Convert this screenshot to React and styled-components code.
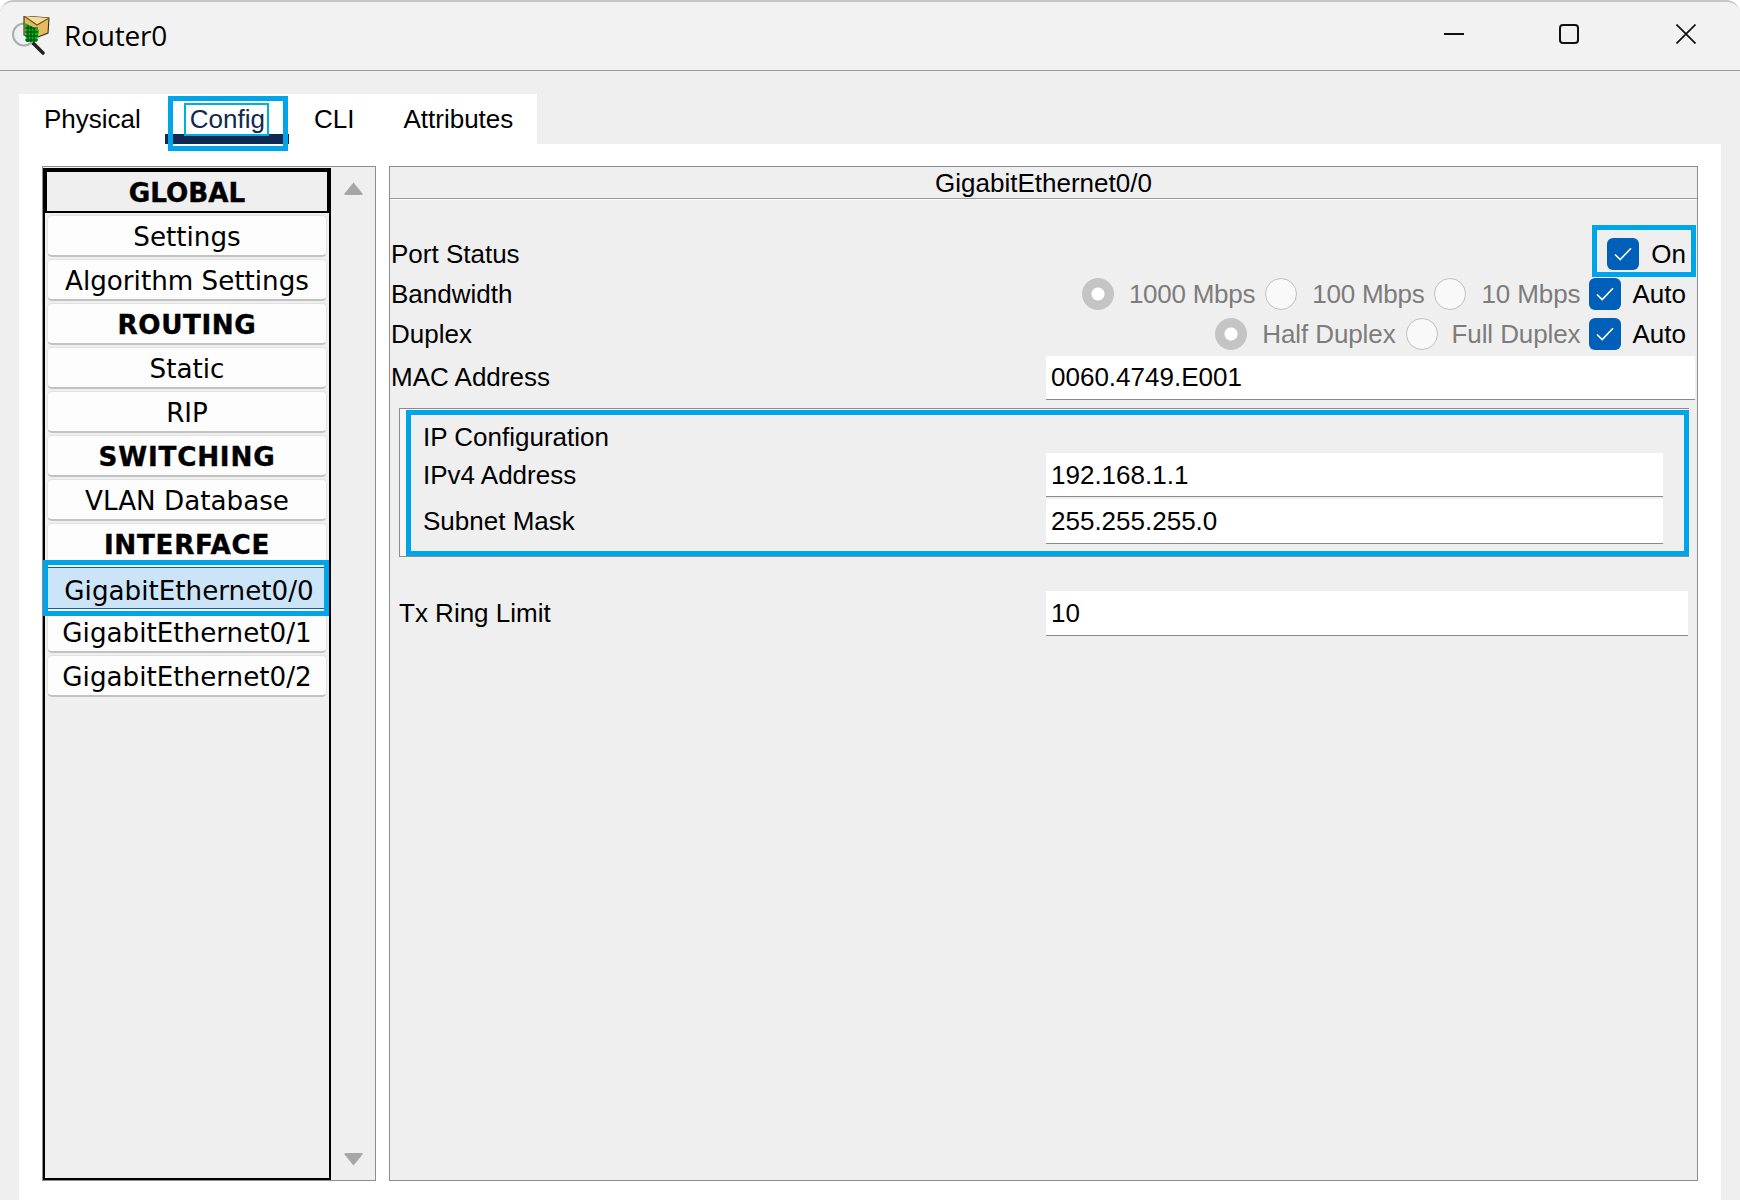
import React from "react";
import styled, { createGlobalStyle } from "styled-components";

const Global = createGlobalStyle`
  html, body { margin: 0; padding: 0; background: #fff; overflow: hidden; }
  * { box-sizing: border-box; }
`;

const Window = styled.div`
  width: 1740px;
  height: 1200px;
  display: flex;
  flex-direction: column;
  background: #efefef;
  border-top: 2px solid #c6c6c6;
  border-radius: 14px 14px 0 0;
  overflow: hidden;
  font-family: "Liberation Sans", Arial, sans-serif;
  color: #000;
`;

const TitleBar = styled.header`
  height: 69px;
  flex: none;
  display: flex;
  align-items: center;
  background: #f2f2f2;
  border-bottom: 1px solid #9c9c9c;
  padding-left: 11px;
`;

const AppIcon = styled.svg`
  width: 40px;
  height: 40px;
  flex: none;
`;

const Title = styled.h1`
  margin: -2px 0 0 13px;
  font: 400 28px "Open Sans", sans-serif;
  letter-spacing: -0.2px;
`;

const Controls = styled.div`
  margin-left: auto;
  margin-top: -4px;
  display: flex;
  padding-right: 44px;
`;

const ControlIcon = styled.svg`
  width: 20px;
  height: 20px;
  display: block;
  fill: none;
  stroke: #111;
  stroke-width: 2;
  margin-left: ${(p) => p.$gap || 0}px;
`;

const Stage = styled.div`
  flex: 1;
  min-height: 0;
  padding: 23px 19px 0;
  display: flex;
  flex-direction: column;
`;

const TabStrip = styled.nav`
  height: 50px;
  flex: none;
  align-self: flex-start;
  display: flex;
  background: #fff;
`;

const Tab = styled.div`
  position: relative;
  height: 50px;
  padding: 0 24px 0 25px;
  display: flex;
  align-items: center;
  font-size: 26px;
  color: ${(p) => (p.$active ? "#10294f" : "#000")};
  ${(p) => p.$active && "border-bottom: 10px solid #0f2a52; padding-top: 10px;"}
`;

const TabText = styled.span`
  position: relative;
`;

const TabFocus = styled.span`
  position: absolute;
  left: -6px;
  right: -4px;
  top: -1px;
  bottom: -1px;
  border: 2px solid #00aee6;
`;

const TabFrame = styled.span`
  position: absolute;
  left: 3px;
  right: 1px;
  top: 2px;
  bottom: -17px;
  border: 5px solid #00a4e8;
`;

const Sheet = styled.main`
  flex: 1;
  min-height: 0;
  background: #fff;
  display: flex;
  gap: 13px;
  padding: 22px 23px 19px 23px;
`;

const Sidebar = styled.aside`
  width: 334px;
  flex: none;
  display: flex;
  background: #efefef;
  border: 1px solid #8c8c94;
`;

const List = styled.div`
  width: 288px;
  flex: none;
  margin: 1px 0 0 0;
  border: 2px solid #000;
  padding: 0 2px;
  display: flex;
  flex-direction: column;
  gap: 2px;
`;

const Row = styled.div`
  height: ${(p) => (p.$focused ? 43 : 42)}px;
  flex: none;
  display: flex;
  align-items: center;
  justify-content: center;
  position: relative;
  padding-top: 2px;
  font-family: "DejaVu Sans", Verdana, sans-serif;
  font-size: 26.2px;
  font-weight: ${(p) => (p.$heading ? 700 : 400)};
  letter-spacing: ${(p) => p.$ls || 0}px;
  ${(p) => p.$heading && "-webkit-text-stroke: 0.4px #000;"}
  background: #fdfdfd;
  border: 1px solid #e2e2e2;
  border-bottom: 2px solid #c2c2c2;
  border-radius: 5px;
  ${(p) =>
    p.$focused &&
    `margin: 0 -2px;
     background: #efefef;
     border: 2px solid #000;
     border-radius: 0;`}
  ${(p) =>
    p.$selected &&
    `background: #cbe4f8;
     border: 0;
     border-top: 1px solid #0b5fa5;
     border-bottom: 1px solid #0b5fa5;
     border-radius: 0;
     padding: 6px 0 0 4px;
     box-shadow: 0 -4px 0 #fdfdfd, 0 4px 0 #fdfdfd;
     z-index: 1;`}
`;

const RowFrame = styled.span`
  position: absolute;
  left: -4px;
  right: -2px;
  top: -8px;
  bottom: -8px;
  border: 5px solid #00a4e8;
`;

const ScrollColumn = styled.div`
  flex: 1;
  position: relative;
  display: flex;
  flex-direction: column;
  align-items: center;
  justify-content: space-between;
  padding: 15px 0 14px;
`;

const Arrow = styled.svg`
  width: 19px;
  height: 14px;
  display: block;
  fill: #a6a6a6;
`;

const Panel = styled.section`
  flex: 1;
  min-width: 0;
  background: #efefef;
  border: 1px solid #8c8c94;
  display: flex;
  flex-direction: column;
`;

const PanelHeader = styled.div`
  height: 32px;
  flex: none;
  display: flex;
  align-items: center;
  justify-content: center;
  padding-top: 2px;
  font-size: 26px;
  border-bottom: 1px solid #9a9a9a;
  box-shadow: 0 1px 0 #fafafa;
`;

const PanelBody = styled.div`
  padding: 39px 2px 0 1px;
  display: flex;
  flex-direction: column;
`;

const ControlRow = styled.div`
  height: 32px;
  margin-bottom: 8px;
  display: flex;
  align-items: center;
  padding-right: 9px;
  font-size: 26px;
`;

const RowLabel = styled.span`
  margin-right: auto;
`;

const RadioOption = styled.span`
  display: flex;
  align-items: center;
  gap: ${(p) => p.$gap || 15}px;
  margin-right: ${(p) => p.$end || 10}px;
  letter-spacing: ${(p) => p.$ls || 0}px;
  color: #7c7c7c;
`;

const Radio = styled.span`
  width: 32px;
  height: 32px;
  border-radius: 50%;
  flex: none;
  display: block;
  background: ${(p) =>
    p.$on ? "radial-gradient(circle, #fff 0 6px, #c4c4c4 7px)" : "#f9f9f9"};
  border: ${(p) => (p.$on ? "0" : "1.5px solid #c0c0c0")};
`;

const Check = styled.span`
  width: 32px;
  height: 32px;
  flex: none;
  display: flex;
  align-items: center;
  justify-content: center;
  background: #005fb8;
  border-radius: 6px;
`;

const CheckMark = styled.svg`
  width: 18px;
  height: 14px;
  fill: none;
  stroke: #fff;
  stroke-width: 1.6;
`;

const CheckOption = styled.span`
  position: relative;
  display: flex;
  align-items: center;
  gap: ${(p) => p.$gap}px;
`;

const OnFrame = styled.span`
  position: absolute;
  left: -15px;
  right: -10px;
  top: -13px;
  bottom: -7px;
  border: 5px solid #00a4e8;
`;

const FieldRow = styled.div`
  display: grid;
  grid-template-columns: ${(p) => p.$label}px ${(p) => p.$field};
  align-items: center;
  font-size: 26px;
  height: ${(p) => p.$h || 44}px;
  flex: none;
`;

const FieldLabel = styled.span`
  margin-top: ${(p) => p.$top || 0}px;
`;

const Field = styled.div`
  height: 100%;
  background: #fff;
  border-bottom: 1px solid #8a8a8a;
  padding-left: 5px;
  padding-top: ${(p) => p.$top || 0}px;
  display: flex;
  align-items: center;
`;

const GroupBox = styled.div`
  margin: 8px 6px 0 8px;
  height: 149px;
  flex: none;
  border: 1px solid #8c8c8c;
  border-right: 0;
  background: #f6f6f6;
  padding: 1px 0 0 6px;
`;

const GroupFrame = styled.div`
  height: 146px;
  border: 5px solid #00a4e8;
  background: #efefef;
  padding: 0 0 0 12px;
`;

const GroupTitle = styled.div`
  height: 38px;
  padding-top: 6px;
  line-height: 32px;
  font-size: 26px;
`;

const Spaced = styled.div`
  margin-bottom: ${(p) => p.$b}px;
  margin-left: ${(p) => p.$l || 0}px;
  margin-right: ${(p) => p.$r || 0}px;
  margin-top: ${(p) => p.$t || 0}px;
`;

const rows = [
  { label: "GLOBAL", heading: true, focused: true },
  { label: "Settings" },
  { label: "Algorithm Settings" },
  { label: "ROUTING", heading: true, ls: 0.6 },
  { label: "Static" },
  { label: "RIP" },
  { label: "SWITCHING", heading: true, ls: 0.8 },
  { label: "VLAN Database" },
  { label: "INTERFACE", heading: true, ls: 0.7 },
  { label: "GigabitEthernet0/0", selected: true },
  { label: "GigabitEthernet0/1" },
  { label: "GigabitEthernet0/2" },
];

const Tick = () => (
  <CheckMark viewBox="0 0 18 14">
    <path d="M1 7.5 L6.2 12.6 L17 1.2" />
  </CheckMark>
);

export default function App() {
  return (
    <>
      <Global />
      <Window>
        <TitleBar>
          <AppIcon viewBox="0 0 40 40">
            <path d="M22 27 L32 37" stroke="#222" strokeWidth="3.6" strokeLinecap="round" />
            <circle cx="13" cy="18.5" r="11" fill="#eef1f1" stroke="#a8adad" strokeWidth="2" />
            <path d="M13 0 L38 2 L37 17 L27 21 L13 19 Z" fill="#e6bb60" stroke="#3a2d10" strokeWidth="1.1" />
            <path d="M13 0 L26 9 L38 2" fill="#f6dd98" stroke="#6b5220" strokeWidth="1.1" />
            <path d="M14 7 L28 14 L26 26 L15 26 Z" fill="#06b51f" />
            <path d="M17 9V26M20 10V26M23 12V26M14 12H27M14 16H27M14 20H27M14 24H27" stroke="#04380b" strokeWidth="1" />
          </AppIcon>
          <Title>Router0</Title>
          <Controls>
            <ControlIcon viewBox="0 0 20 20"><path d="M0 10H20" /></ControlIcon>
            <ControlIcon $gap={95} viewBox="0 0 20 20"><rect x="1" y="1" width="18" height="18" rx="3" /></ControlIcon>
            <ControlIcon $gap={97} viewBox="0 0 20 20"><path d="M0.5 0.5L19.5 19.5M19.5 0.5L0.5 19.5" strokeWidth="1.7" /></ControlIcon>
          </Controls>
        </TitleBar>
        <Stage>
          <TabStrip>
            <Tab>Physical</Tab>
            <Tab $active>
              <TabFrame />
              <TabText>
                Config
                <TabFocus />
              </TabText>
            </Tab>
            <Tab>CLI</Tab>
            <Tab>Attributes</Tab>
          </TabStrip>
          <Sheet>
            <Sidebar>
              <List>
                {rows.map((r) => (
                  <Row key={r.label} $heading={r.heading} $focused={r.focused} $selected={r.selected} $ls={r.ls}>
                    {r.label}
                    {r.selected && <RowFrame />}
                  </Row>
                ))}
              </List>
              <ScrollColumn>
                <Arrow viewBox="0 0 19 14"><path d="M9.5 0.5 L18.5 11.5 Q19 13 17.5 13 H1.5 Q0 13 0.5 11.5 Z" /></Arrow>
                <Arrow viewBox="0 0 19 14"><path d="M9.5 13.5 L18.5 2.5 Q19 1 17.5 1 H1.5 Q0 1 0.5 2.5 Z" /></Arrow>
              </ScrollColumn>
            </Sidebar>
            <Panel>
              <PanelHeader>GigabitEthernet0/0</PanelHeader>
              <PanelBody>
                <ControlRow>
                  <RowLabel>Port Status</RowLabel>
                  <CheckOption $gap={12}>
                    <OnFrame />
                    <Check><Tick /></Check>
                    On
                  </CheckOption>
                </ControlRow>
                <ControlRow>
                  <RowLabel>Bandwidth</RowLabel>
                  <RadioOption $ls={-0.25}><Radio $on />1000 Mbps</RadioOption>
                  <RadioOption $ls={-0.25}><Radio />100 Mbps</RadioOption>
                  <RadioOption $end={8} $ls={-0.1}><Radio />10 Mbps</RadioOption>
                  <CheckOption $gap={12}><Check><Tick /></Check>Auto</CheckOption>
                </ControlRow>
                <ControlRow>
                  <RowLabel>Duplex</RowLabel>
                  <RadioOption $ls={-0.1}><Radio $on />Half Duplex</RadioOption>
                  <RadioOption $end={8} $ls={-0.1} $gap={14}><Radio />Full Duplex</RadioOption>
                  <CheckOption $gap={12}><Check><Tick /></Check>Auto</CheckOption>
                </ControlRow>
                <Spaced $b={0} $t={-2}>
                  <FieldRow $label={655} $field="1fr">
                    <FieldLabel $top={-1}>MAC Address</FieldLabel>
                    <Field>0060.4749.E001</Field>
                  </FieldRow>
                </Spaced>
                <GroupBox>
                  <GroupFrame>
                    <GroupTitle>IP Configuration</GroupTitle>
                    <FieldRow $label={623} $field="617px">
                      <FieldLabel>IPv4 Address</FieldLabel>
                      <Field $top={2}>192.168.1.1</Field>
                    </FieldRow>
                    <Spaced $b={0} $t={2}>
                      <FieldRow $label={623} $field="617px" $h={45}>
                        <FieldLabel>Subnet Mask</FieldLabel>
                        <Field>255.255.255.0</Field>
                      </FieldRow>
                    </Spaced>
                  </GroupFrame>
                </GroupBox>
                <Spaced $b={0} $t={34} $l={8} $r={7}>
                  <FieldRow $label={647} $field="1fr" $h={45}>
                    <FieldLabel>Tx Ring Limit</FieldLabel>
                    <Field>10</Field>
                  </FieldRow>
                </Spaced>
              </PanelBody>
            </Panel>
          </Sheet>
        </Stage>
      </Window>
    </>
  );
}
